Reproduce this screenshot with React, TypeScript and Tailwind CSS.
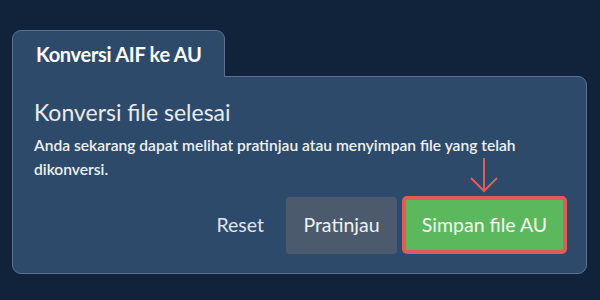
export default function App() {
  return (
    <div
      className="w-[600px] h-[300px] bg-[#10233a] pt-[30px] pl-[12px] pr-[13px]"
      style={{ fontFamily: 'Lato, "Open Sans", sans-serif' }}
    >
      {/* Tab */}
      <div className="relative z-10 -mb-px w-[213px] h-[47px] rounded-t-[9px] border border-b-0 border-[#5b7391] bg-[#2d4a6a] flex items-center pl-[23px]">
        <span className="text-white text-[20px] font-bold tracking-[-0.3px]">Konversi AIF ke AU</span>
      </div>

      {/* Panel */}
      <div className="h-[198px] rounded-b-[9px] rounded-tr-[9px] border border-[#5b7391] bg-[#2d4a6a] pl-[21px] pr-[19px] pt-[19px] pb-[19px] flex flex-col">
        <h2 className="text-[#e8ebef] text-[23px] leading-[32px] [font-variant-ligatures:common-ligatures]">
          Konversi file selesai
        </h2>
        <p className="mt-[5px] text-[#edf0f3] text-[15.6px] font-semibold leading-[24px] pr-[30px]">
          Anda sekarang dapat melihat pratinjau atau menyimpan file yang telah dikonversi.
        </p>

        <div className="mt-auto flex items-center justify-end">
          <button className="mr-[22px] text-[#e0e4ea] text-[19.5px] leading-none">Reset</button>
          <button className="w-[111px] h-[57px] rounded-[4px] bg-[#4b5b6d] text-[#eef0f2] text-[19.5px]">
            Pratinjau
          </button>
          <div className="relative ml-[5px]">
            <svg
              className="absolute left-[68px] -top-[38px]"
              width="30"
              height="36"
              viewBox="0 0 30 36"
              fill="none"
              stroke="#e05c5c"
              strokeWidth="2"
            >
              <line x1="14" y1="0" x2="14" y2="33" />
              <polyline points="1,20 14,33 27,20" />
            </svg>
            <button className="w-[165px] h-[58px] rounded-[5px] border-[4px] border-[#e05c5c] bg-[#5cb85c] text-[#f4f8f4] text-[19.5px]">
              Simpan file AU
            </button>
          </div>
        </div>
      </div>
    </div>
  );
}
